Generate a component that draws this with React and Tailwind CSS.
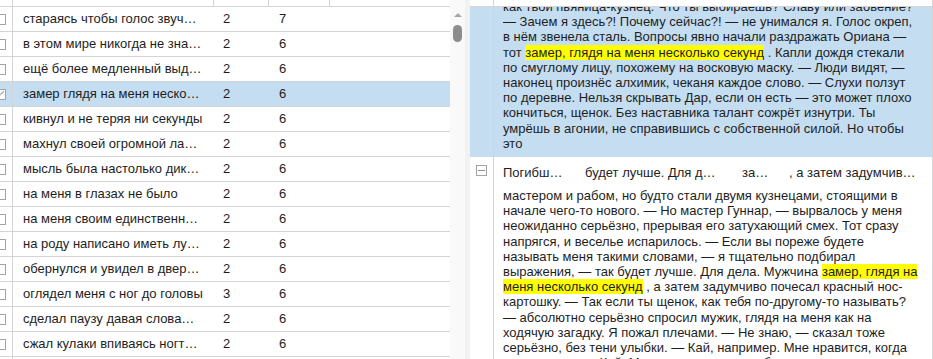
const rows = [
  { text: 'стараясь чтобы голос звуч…', a: 2, b: 7 },
  { text: 'в этом мире никогда не зна…', a: 2, b: 6 },
  { text: 'ещё более медленный выд…', a: 2, b: 6 },
  { text: 'замер глядя на меня неско…', a: 2, b: 6, checked: true },
  { text: 'кивнул и не теряя ни секунды', a: 2, b: 6 },
  { text: 'махнул своей огромной ла…', a: 2, b: 6 },
  { text: 'мысль была настолько дик…', a: 2, b: 6 },
  { text: 'на меня в глазах не было', a: 2, b: 6 },
  { text: 'на меня своим единственн…', a: 2, b: 6 },
  { text: 'на роду написано иметь лу…', a: 2, b: 6 },
  { text: 'обернулся и увидел в двер…', a: 2, b: 6 },
  { text: 'оглядел меня с ног до головы', a: 3, b: 6 },
  { text: 'сделал паузу давая слова…', a: 2, b: 6 },
  { text: 'сжал кулаки впиваясь ногт…', a: 2, b: 6 },
];

const Mark = ({ children }) => <span className="bg-[#ffff00]">{children}</span>;

function Checkbox({ checked }) {
  return (
    <span className="-ml-[5px] flex h-[11px] w-[11px] items-center justify-center border border-[#a3a3a3] bg-white">
      {checked && (
        <svg width="9" height="9" viewBox="0 0 9 9">
          <path d="M1 8 L8 1" stroke="#a8a8a8" strokeWidth="1.2" fill="none" />
        </svg>
      )}
    </span>
  );
}

function Grid() {
  return (
    <div className="flex w-[450px] shrink-0 flex-col overflow-hidden">
      <div className="flex h-[7px] shrink-0 border-b border-[#d4d4d4]">
        <div className="w-[13px] border-r border-[#d4d4d4]" />
        <div className="w-[201px] border-r border-[#d4d4d4]" />
        <div className="w-[55px] border-r border-[#d4d4d4]" />
        <div className="w-[61px] border-r border-[#d4d4d4]" />
        <div className="flex-1" />
      </div>
      {rows.map((r, i) => (
        <div
          key={i}
          className={`flex h-[25px] shrink-0 items-center border-b border-[#d4d4d4] ${r.checked ? 'bg-[#c4ddf1]' : 'bg-white'}`}
        >
          <div className="flex h-full w-[13px] items-center border-r border-[#d4d4d4]">
            <Checkbox checked={r.checked} />
          </div>
          <div className="w-[201px] overflow-hidden whitespace-nowrap pl-[10px]">{r.text}</div>
          <div className="w-[55px] pl-[9px]">{r.a}</div>
          <div className="w-[61px] pl-[10px]">{r.b}</div>
        </div>
      ))}
      <div className="flex flex-1">
        <div className="w-[13px] border-r border-[#d4d4d4]" />
      </div>
    </div>
  );
}

function Scrollbar() {
  return (
    <div className="flex w-[15px] shrink-0 flex-col items-center bg-[#f9f9f9]">
      <div className="mt-[13px] h-0 w-0 border-x-[4px] border-b-[4px] border-x-transparent border-b-[#a6a6a6]" />
      <div className="mt-[8px] h-[17px] w-[9px] rounded-full bg-[#8d8d8d]" />
    </div>
  );
}

function Detail() {
  return (
    <div className="flex min-w-0 flex-1 flex-col border-r border-[#d4d4d4]">
      <div className="flex h-[7px] shrink-0 border-b border-[#d4d4d4]">
        <div className="w-[24px] border-r border-[#d4d4d4]" />
      </div>
      <div className="flex-1 overflow-hidden">
        <div className="flex h-[150px] bg-[#c4ddf1]">
          <div className="w-[24px] shrink-0 border-r border-[#d4d4d4]" />
          <div className="flex-1 overflow-hidden pl-[9px] pr-[11px]">
            <p className="-mt-[8px] leading-[15.2px]">
              как твои пьяница-кузнец. Что ты выбираешь? Славу или забвение?
              — Зачем я здесь?! Почему сейчас?! — не унимался я. Голос окреп,
              в нём звенела сталь. Вопросы явно начали раздражать Ориана — тот{' '}
              <Mark>замер, глядя на меня несколько секунд</Mark> . Капли дождя стекали по
              смуглому лицу, похожему на восковую маску. — Люди видят, — наконец
              произнёс алхимик, чеканя каждое слово. — Слухи ползут по деревне.
              Нельзя скрывать Дар, если он есть — это может плохо кончиться, щенок.
              Без наставника талант сожрёт изнутри. Ты умрёшь в агонии, не
              справившись с собственной силой. Но чтобы это
            </p>
          </div>
        </div>
        <div className="flex bg-white">
          <div className="w-[24px] shrink-0 border-r border-[#d4d4d4] pl-[6px] pt-[8px]">
            <span className="flex h-[11px] w-[11px] items-center justify-center border border-[#a3a3a3]">
              <span className="h-px w-[7px] bg-[#8f8f8f]" />
            </span>
          </div>
          <div className="flex-1 overflow-hidden pl-[9px] pr-[11px] pt-[8px]">
            <div className="flex h-[15px] whitespace-nowrap leading-[15px]">
              <div className="w-[82px]">Погибш…</div>
              <div className="w-[157px]">будет лучше. Для д…</div>
              <div className="w-[47px]">за…</div>
              <div>, а затем задумчив…</div>
            </div>
            <p className="mt-[8px] leading-[15.2px]">
              мастером и рабом, но будто стали двумя кузнецами, стоящими в начале
              чего-то нового. — Но мастер Гуннар, — вырвалось у меня неожиданно
              серьёзно, прерывая его затухающий смех. Тот сразу напрягся, и веселье
              испарилось. — Если вы пореже будете называть меня такими словами, — я
              тщательно подбирал выражения, — так будет лучше. Для дела. Мужчина{' '}
              <Mark>замер, глядя на меня несколько секунд</Mark> , а затем задумчиво
              почесал красный нос-картошку. — Так если ты щенок, как тебя
              по-другому-то называть? — абсолютно серьёзно спросил мужик, глядя на
              меня как на ходячую загадку. Я пожал плечами. — Не знаю, — сказал тоже
              серьёзно, без тени улыбки. — Кай, например. Мне нравится, когда меня
              называют Кай. Мужчина стоял очень близко.
            </p>
          </div>
        </div>
      </div>
    </div>
  );
}

export default function App() {
  return (
    <div className="flex h-[359px] w-[933px] overflow-hidden bg-white font-['Liberation_Sans',Arial,sans-serif] text-[13px] text-[#1e1e1e]">
      <Grid />
      <Scrollbar />
      <div className="w-[5px] shrink-0 bg-[#f2f2f2]" />
      <Detail />
    </div>
  );
}
